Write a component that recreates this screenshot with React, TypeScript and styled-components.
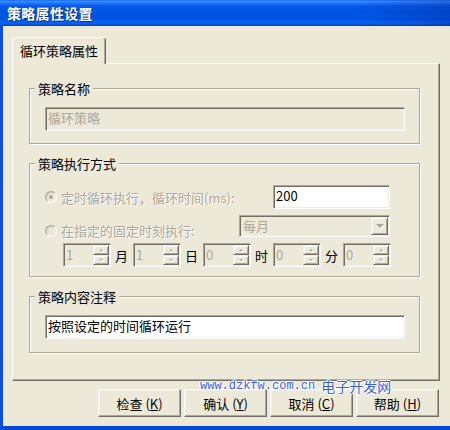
import React from "react";
import styled, { createGlobalStyle } from "styled-components";

const CJK = `"Noto Sans CJK SC", "Noto Sans", sans-serif`;

const GlobalStyle = createGlobalStyle`
  html, body { margin: 0; padding: 0; background: #ECE9D8; }
  body { font-family: ${CJK}; font-size: 13px; color: #000; }
  * { box-sizing: border-box; }
`;

const Window = styled.div`
  position: relative;
  width: 450px;
  height: 430px;
  display: flex;
  flex-direction: column;
  overflow: hidden;
  background: #ece9d8;
`;

const TitleBar = styled.div`
  height: 26px;
  flex: none;
  display: flex;
  align-items: center;
  padding-left: 7px;
  background:
    linear-gradient(to right, rgba(0, 0, 0, 0) 80%, rgba(0, 20, 120, 0.25) 100%),
    linear-gradient(
      to bottom,
      #0a5ff0 0px,
      #3d8eff 1px,
      #2478fa 3px,
      #0659e8 6px,
      #0055e3 11px,
      #0055e3 19px,
      #0a63f3 23px,
      #0050dc 25px,
      #003fc0 26px
    );
  color: #fff;
  font-size: 14px;
  font-weight: bold;
  line-height: 16px;
  letter-spacing: 0.3px;
  text-shadow: 1px 1px 0 #0a2a8a;
`;

const Body = styled.div`
  flex: 1;
  display: flex;
  flex-direction: column;
  padding: 11px 10px 0 9px;
  border-left: 3px solid #0a4ee6;
  border-bottom: 4px solid #0846dc;
`;

const TabStrip = styled.div`
  display: flex;
  height: 26px;
`;

const Tab = styled.div`
  position: relative;
  z-index: 1;
  width: 94px;
  height: 27px;
  padding: 6px 0 0 7px;
  border-top: 1px solid #fff;
  border-left: 1px solid #fff;
  border-right: 1px solid #716f64;
  box-shadow: inset -1px 0 0 #aca899;
  border-radius: 3px 3px 0 0;
  background: #ece9d8;
  font-size: 13px;
  line-height: 13px;
  white-space: nowrap;
`;

const Panel = styled.div`
  width: 428px;
  height: 318px;
  border-top: 1px solid #fff;
  border-left: 1px solid #fff;
  border-right: 1px solid #716f64;
  border-bottom: 1px solid #716f64;
  box-shadow: inset -1px -1px 0 #aca899;
  padding: 24px 0 0 16px;
  display: flex;
  flex-direction: column;
  gap: 19px;
`;

const Group = styled.div<{ $h: number; $pt: number }>`
  position: relative;
  width: 391px;
  height: ${(p) => p.$h}px;
  border: 1px solid #aca899;
  box-shadow: inset 1px 1px 0 #fff, 1px 1px 0 #fff;
  padding: ${(p) => p.$pt}px 0 0 15px;
  display: flex;
  flex-direction: column;
  gap: 6px;
`;

const Legend = styled.span`
  position: absolute;
  top: -7px;
  left: 5px;
  padding: 0 3px;
  background: #ece9d8;
  font-size: 13px;
  line-height: 13px;
  white-space: nowrap;
`;

const Field = styled.div<{ $w: number; $disabled?: boolean }>`
  width: ${(p) => p.$w}px;
  height: 24px;
  flex: none;
  border: 1px solid;
  border-color: #aca899 #fff #fff #aca899;
  box-shadow: inset 1px 1px 0 #716f64, inset -1px -1px 0 #f1efe2;
  background: ${(p) => (p.$disabled ? "#ece9d8" : "#fff")};
  color: ${(p) => (p.$disabled ? "#aca899" : "#000")};
  padding: 1px 0 0 2px;
  font-size: 13px;
  line-height: 17px;
  white-space: nowrap;
`;

const Row = styled.div<{ $h: number; $align?: string }>`
  width: 345px;
  height: ${(p) => p.$h}px;
  display: flex;
  align-items: ${(p) => p.$align ?? "center"};
  justify-content: space-between;
`;

const Option = styled.div`
  display: flex;
  align-items: center;
  gap: 4px;
  color: #aca899;
  text-shadow: 1px 1px 0 #fff;
  font-size: 13px;
  line-height: 13px;
  white-space: nowrap;
`;

const Radio = styled.span<{ $checked?: boolean }>`
  position: relative;
  width: 12px;
  height: 12px;
  flex: none;
  border-radius: 50%;
  border: 1px solid;
  border-color: #aca899 #fff #fff #aca899;
  box-shadow: inset 1px 1px 0 #cac8bb;
  background: #ece9d8;
  &::after {
    content: "";
    display: ${(p) => (p.$checked ? "block" : "none")};
    position: absolute;
    left: 3px;
    top: 3px;
    width: 4px;
    height: 4px;
    border-radius: 50%;
    background: #aca899;
  }
`;

const Combo = styled.div`
  width: 151px;
  height: 22px;
  display: flex;
  border: 1px solid;
  border-color: #aca899 #fff #fff #aca899;
  box-shadow: inset 1px 1px 0 #716f64, inset -1px -1px 0 #f1efe2;
  background: #ece9d8;
  padding: 1px;
`;

const ComboText = styled.div`
  flex: 1;
  padding-left: 2px;
  color: #aca899;
  font-size: 13px;
  line-height: 17px;
`;

const RaisedBtn = styled.div`
  display: flex;
  align-items: center;
  justify-content: center;
  border: 1px solid;
  border-color: #f1efe2 #716f64 #716f64 #f1efe2;
  box-shadow: inset 1px 1px 0 #fff, inset -1px -1px 0 #aca899;
  background: #ece9d8;
`;

const ComboBtn = styled(RaisedBtn)`
  width: 17px;
  height: 18px;
`;

const Arrow = styled.span<{ $up?: boolean; $size: number }>`
  width: 0;
  height: 0;
  border-left: ${(p) => p.$size}px solid transparent;
  border-right: ${(p) => p.$size}px solid transparent;
  ${(p) =>
    p.$up
      ? `border-bottom: ${p.$size}px solid #aca899;`
      : `border-top: ${p.$size}px solid #aca899;`}
  filter: drop-shadow(1px 1px 0 #fff);
`;

const SpinRow = styled.div`
  display: flex;
  padding-left: 18px;
  height: 24px;
`;

const SpinUnit = styled.div`
  width: 70px;
  display: flex;
  align-items: center;
  gap: 4px;
`;

const Spin = styled.div`
  width: 48px;
  height: 24px;
  flex: none;
  display: flex;
  border: 1px solid;
  border-color: #aca899 #fff #fff #aca899;
  box-shadow: inset 1px 1px 0 #716f64, inset -1px -1px 0 #f1efe2;
  background: #ece9d8;
  padding: 1px;
`;

const SpinValue = styled.div`
  flex: 1;
  padding-left: 1px;
  color: #aca899;
  font-size: 13px;
  line-height: 19px;
`;

const SpinButtons = styled.div`
  width: 16px;
  display: flex;
  flex-direction: column;
`;

const SpinBtn = styled(RaisedBtn)`
  height: 10px;
`;

const UnitLabel = styled.span`
  font-size: 13px;
  line-height: 13px;
`;

const ButtonBar = styled.div`
  display: flex;
  justify-content: flex-end;
  gap: 3px;
  margin-top: 8px;
  margin-right: 1px;
`;

const Button = styled.div`
  width: 83px;
  height: 28px;
  display: flex;
  align-items: center;
  justify-content: center;
  border: 1px solid;
  border-color: #fff #716f64 #716f64 #fff;
  box-shadow: inset -1px -1px 0 #aca899, inset 1px 1px 0 #f1efe2;
  font-size: 13px;
  line-height: 13px;
  white-space: nowrap;
`;

const Accel = styled.span`
  margin-left: 3px;
`;

const Key = styled.span`
  text-decoration: underline;
`;

const Watermark = styled.div`
  position: absolute;
  left: 200px;
  top: 378px;
  display: flex;
  align-items: center;
  gap: 6px;
  color: #3a5cf0;
  text-shadow: 1px 0 0 #fff, -1px 0 0 #fff, 0 1px 0 #fff, 0 -1px 0 #fff, 0 0 3px #fff;
  white-space: nowrap;
`;

const WmUrl = styled.span`
  font-family: "Liberation Mono", monospace;
  font-size: 12px;
  line-height: 14px;
`;

const WmName = styled.span`
  font-family: ${CJK};
  font-size: 14px;
  line-height: 16px;
`;

const Spinner: React.FC<{ value: string; label?: string }> = ({ value, label }) => (
  <SpinUnit>
    <Spin>
      <SpinValue>{value}</SpinValue>
      <SpinButtons>
        <SpinBtn>
          <Arrow $up $size={2} />
        </SpinBtn>
        <SpinBtn>
          <Arrow $size={2} />
        </SpinBtn>
      </SpinButtons>
    </Spin>
    {label && <UnitLabel>{label}</UnitLabel>}
  </SpinUnit>
);

const DialogButton: React.FC<{ label: string; accel: string }> = ({ label, accel }) => (
  <Button>
    {label}
    <Accel>
      (<Key>{accel}</Key>)
    </Accel>
  </Button>
);

export default function App() {
  return (
    <>
      <GlobalStyle />
      <Window>
        <TitleBar>策略属性设置</TitleBar>
        <Body>
          <TabStrip>
            <Tab>循环策略属性</Tab>
          </TabStrip>
          <Panel>
            <Group $h={56} $pt={18}>
              <Legend>策略名称</Legend>
              <Field $w={360} $disabled>
                循环策略
              </Field>
            </Group>
            <Group $h={114} $pt={21}>
              <Legend>策略执行方式</Legend>
              <Row $h={24}>
                <Option>
                  <Radio $checked />
                  定时循环执行，循环时间(ms):
                </Option>
                <Field $w={117}>200</Field>
              </Row>
              <Row $h={22} $align="flex-end">
                <Option>
                  <Radio />
                  在指定的固定时刻执行:
                </Option>
                <Combo>
                  <ComboText>每月</ComboText>
                  <ComboBtn>
                    <Arrow $size={4} />
                  </ComboBtn>
                </Combo>
              </Row>
              <SpinRow>
                <Spinner value="1" label="月" />
                <Spinner value="1" label="日" />
                <Spinner value="0" label="时" />
                <Spinner value="0" label="分" />
                <Spinner value="0" />
              </SpinRow>
            </Group>
            <Group $h={57} $pt={18}>
              <Legend>策略内容注释</Legend>
              <Field $w={360}>按照设定的时间循环运行</Field>
            </Group>
          </Panel>
          <ButtonBar>
            <DialogButton label="检查" accel="K" />
            <DialogButton label="确认" accel="Y" />
            <DialogButton label="取消" accel="C" />
            <DialogButton label="帮助" accel="H" />
          </ButtonBar>
        </Body>
        <Watermark>
          <WmUrl>www.dzkfw.com.cn</WmUrl>
          <WmName>电子开发网</WmName>
        </Watermark>
      </Window>
    </>
  );
}
